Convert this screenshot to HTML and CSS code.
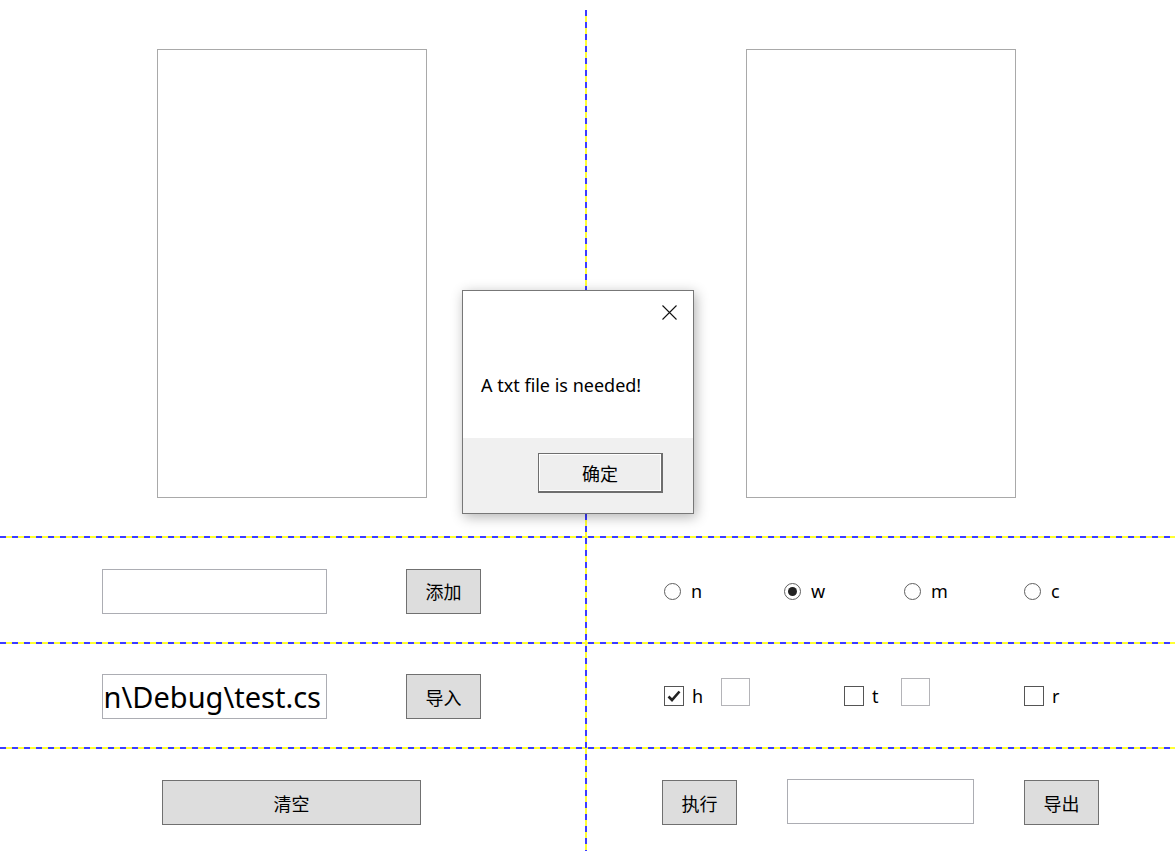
FILE: index.html
```html
<!DOCTYPE html>
<html lang="zh-CN">
<head>
    <meta charset="UTF-8">
    <meta name="viewport" content="width=device-width, initial-scale=1.0">
    <title>Form1</title>
    <link rel="stylesheet" href="styles.css">
</head>
<body>

<div class="form">
    <div class="cell list-cell left-col">
        <div class="listbox"></div>
    </div>
    <div class="cell list-cell right-col">
        <div class="listbox"></div>
    </div>

    <div class="hline line-1"></div>

    <div class="cell row-cell left-col row-2">
        <div class="textbox"></div>
        <button class="btn">添加</button>
    </div>
    <div class="cell option-cell right-col row-2">
        <label class="radio"><span class="dot"></span>n</label>
        <label class="radio checked"><span class="dot"></span>w</label>
        <label class="radio"><span class="dot"></span>m</label>
        <label class="radio"><span class="dot"></span>c</label>
    </div>

    <div class="hline line-2"></div>

    <div class="cell row-cell left-col row-3">
        <div class="textbox path"><span>C:\Users\admin\source\repos\WindowsFormsApplication\bin\Debug\test.cs</span></div>
        <button class="btn">导入</button>
    </div>
    <div class="cell option-cell right-col row-3">
        <div class="check-group">
            <label class="check checked">
                <span class="box">
                    <svg width="16" height="16" viewBox="0 0 16 16"><path d="M2.5 8.5 L6 12 L13.5 3.5" fill="none" stroke="#222" stroke-width="2.6"/></svg>
                </span>h
            </label>
            <div class="mini-box"></div>
        </div>
        <div class="check-group">
            <label class="check"><span class="box"></span>t</label>
            <div class="mini-box"></div>
        </div>
        <div class="check-group last">
            <label class="check"><span class="box"></span>r</label>
        </div>
    </div>

    <div class="hline line-3"></div>

    <div class="cell bottom-left left-col row-4">
        <button class="btn wide">清空</button>
    </div>
    <div class="cell bottom-right right-col row-4">
        <button class="btn">执行</button>
        <div class="textbox output"></div>
        <button class="btn">导出</button>
    </div>

    <div class="vline"></div>

    <!-- message box on top of the form -->
    <div class="msgbox">
        <div class="msg-top">
            <svg class="close" width="15" height="15" viewBox="0 0 15 15"><path d="M0.5 0.5 L14.5 14.5 M14.5 0.5 L0.5 14.5" stroke="#111" stroke-width="1.1"/></svg>
        </div>
        <p class="msg-text">A txt file is needed!</p>
        <div class="msg-footer">
            <button class="btn ok">确定</button>
        </div>
    </div>
</div>

</body>
</html>
```

FILE: styles.css
```css
body {
    margin: 0;
    background-color: #ffffff;
    font-family: 'Noto Sans', 'Noto Sans CJK SC', sans-serif;
    font-size: 18px;
    color: #000000;
}

.form {
    position: relative;
    width: 1175px;
    height: 851px;
    overflow: hidden;
    display: grid;
    grid-template-columns: 585px 2px minmax(0, 1fr);
    grid-template-rows: 536px 2px 104px 2px 103px 2px 1fr;
}

.left-col { grid-column: 1; }
.right-col { grid-column: 3; }
.row-2 { grid-row: 3; }
.row-3 { grid-row: 5; }
.row-4 { grid-row: 7; }

.cell {
    display: flex;
    align-items: center;
}

/* dashed separators: yellow under blue dashes */
.hline {
    grid-column: 1 / 4;
    background: repeating-linear-gradient(90deg, #3c3cff 0 6px, #ffff33 6px 12px);
}

.line-1 { grid-row: 2; }
.line-2 { grid-row: 4; }
.line-3 { grid-row: 6; }

.vline {
    grid-column: 2;
    grid-row: 1 / 8;
    margin-top: 10px;
    z-index: 1;
    background: repeating-linear-gradient(180deg, #3c3cff 0 6px, #ffff33 6px 12px);
}

.list-cell {
    grid-row: 1;
    align-items: flex-start;
    padding-top: 49px;
}

.list-cell.left-col { padding-left: 157px; }
.list-cell.right-col { padding-left: 159px; }

.listbox {
    width: 268px;
    height: 447px;
    border: 1px solid #a9a9a9;
    background: #ffffff;
}

.row-cell {
    padding-left: 102px;
    gap: 79px;
}

.row-2 { padding-top: 2px; }

.textbox {
    box-sizing: border-box;
    width: 225px;
    height: 45px;
    border: 1px solid #acadb3;
    background: #ffffff;
}

.path {
    display: flex;
    justify-content: flex-end;
    align-items: center;
    overflow: hidden;
    white-space: nowrap;
    padding-right: 5px;
    font-size: 29px;
    line-height: 1;
}

.btn {
    box-sizing: border-box;
    width: 75px;
    height: 45px;
    padding: 0;
    border: 1px solid #707070;
    background: #dddddd;
    font-family: inherit;
    font-size: 18px;
    color: #000000;
}

.row-3 { padding-top: 2px; }

.option-cell {
    padding-left: 77px;
}

.radio {
    display: flex;
    align-items: center;
    width: 120px;
    gap: 10px;
    line-height: 1;
}

.radio .dot {
    box-sizing: border-box;
    width: 17px;
    height: 17px;
    border: 1px solid #5f5f5f;
    border-radius: 50%;
    display: flex;
    align-items: center;
    justify-content: center;
}

.radio.checked .dot::after {
    content: "";
    width: 9px;
    height: 9px;
    border-radius: 50%;
    background: #222222;
}

.row-3.option-cell {
    align-items: flex-end;
    padding-bottom: 41px;
}

.check-group {
    display: flex;
    align-items: flex-end;
    width: 180px;
    flex-shrink: 0;
}

.check-group.last {
    width: auto;
}

.check {
    display: flex;
    align-items: center;
    gap: 8px;
    width: 57px;
    line-height: 1;
}

.check .box {
    box-sizing: border-box;
    width: 20px;
    height: 20px;
    border: 1px solid #555555;
    display: flex;
    align-items: center;
    justify-content: center;
}

.mini-box {
    box-sizing: border-box;
    width: 29px;
    height: 28px;
    border: 1px solid #b4b4b8;
}

.bottom-left {
    padding-left: 162px;
    padding-top: 5px;
}

.wide {
    width: 259px;
    height: 45px;
}

.bottom-right {
    padding-left: 75px;
    padding-top: 5px;
    gap: 50px;
}

.output {
    width: 187px;
    height: 45px;
    margin-top: -2px;
}

/* message box */
.msgbox {
    position: absolute;
    left: 462px;
    top: 290px;
    width: 232px;
    height: 224px;
    box-sizing: border-box;
    border: 1px solid #777777;
    background: #ffffff;
    box-shadow: 2px 3px 12px rgba(0, 0, 0, 0.3);
    display: flex;
    flex-direction: column;
    z-index: 2;
}

.msg-top {
    display: flex;
    justify-content: flex-end;
    padding: 14px 16px 0 0;
    height: 29px;
}

.msg-text {
    margin: 0;
    padding: 42px 0 0 18px;
    height: 104px;
    box-sizing: border-box;
    line-height: 1;
}

.msg-footer {
    flex: 1;
    background: #f0f0f0;
    display: flex;
    justify-content: flex-end;
    padding: 15px 30px 0 0;
}

.ok {
    width: 125px;
    height: 40px;
    border-right-width: 2px;
    border-bottom-width: 2px;
    border-color: #6e6e6e;
    background: #eeeeee;
    box-shadow: inset 1px 1px 0 #ffffff, inset -1px -1px 0 #ffffff;
}
```
